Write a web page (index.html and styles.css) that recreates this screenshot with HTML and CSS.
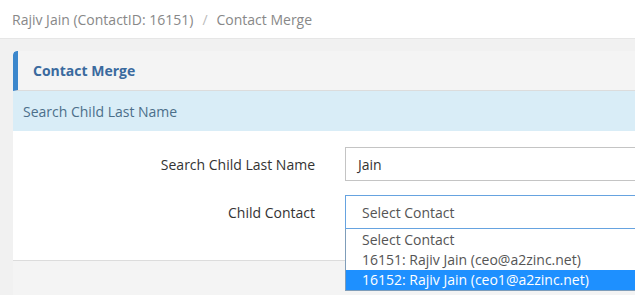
FILE: index.html
```html
<!DOCTYPE html>
<html>
<head>
<meta charset="utf-8">
<link rel="stylesheet" href="styles.css">
</head>
<body>
<div class="breadcrumb">
  <span class="crumb">Rajiv Jain (ContactID: 16151)</span>
  <span class="sep">/</span>
  <span class="crumb">Contact Merge</span>
</div>
<div class="page">
  <div class="panel">
    <div class="panel-heading">Contact Merge</div>
    <div class="info-bar">Search Child Last Name</div>
    <div class="panel-body">
      <div class="form-row">
        <label class="label">Search Child Last Name</label>
        <div class="input">Jain</div>
      </div>
      <div class="form-row">
        <label class="label">Child Contact</label>
        <div class="select-wrap">
          <div class="select">Select Contact</div>
          <div class="listbox">
            <div class="option">Select Contact</div>
            <div class="option">16151: Rajiv Jain (ceo@a2zinc.net)</div>
            <div class="option selected">16152: Rajiv Jain (ceo1@a2zinc.net)</div>
          </div>
        </div>
      </div>
    </div>
    <div class="panel-footer"></div>
  </div>
</div>
</body>
</html>
```
FILE: styles.css
```css
html, body {
  margin: 0;
  padding: 0;
  overflow: hidden;
}
body {
  font-family: "Open Sans", "Liberation Sans", sans-serif;
  background: #f1f1f1;
  width: 635px;
  height: 295px;
}
.breadcrumb {
  height: 38px;
  background: #fff;
  border-bottom: 1px solid #e6e6e6;
  display: flex;
  align-items: center;
  padding-left: 12px;
  font-size: 14px;
  color: #888;
  gap: 9px;
}
.sep {
  color: #bbb;
}
.page {
  padding: 12px 0 0 13px;
}
.panel {
  width: 622px;
  overflow: hidden;
  background: #fff;
  border-top-left-radius: 4px;
}
.panel-heading {
  height: 40px;
  box-sizing: border-box;
  border-left: 5px solid #3c87cc;
  border-top-left-radius: 4px;
  border-bottom: 1px solid #dcdcdc;
  background: #f4f4f4;
  padding-left: 15px;
  display: flex;
  align-items: center;
  font-size: 14px;
  font-weight: bold;
  color: #3a6a9e;
}
.info-bar {
  height: 40px;
  background: #d9edf7;
  padding-left: 10px;
  display: flex;
  align-items: center;
  font-size: 14px;
  color: #4c6f8a;
  box-sizing: border-box;
}
.panel-body {
  height: 129px;
  padding-top: 16px;
  box-sizing: border-box;
  display: flex;
  flex-direction: column;
  gap: 14px;
}
.form-row {
  display: grid;
  grid-template-columns: 302px 1fr;
  column-gap: 30px;
  align-items: center;
  margin-right: -2px;
}
.label {
  text-align: right;
  font-size: 14px;
  color: #333;
}
.input, .select {
  height: 34px;
  box-sizing: border-box;
  border: 1px solid #c4c4c4;
  display: flex;
  align-items: center;
  font-size: 14px;
  color: #333;
  padding-left: 12px;
  background: #fff;
}
.select {
  border-color: #66a3e0;
  padding-left: 16px;
  color: #555;
}
.select-wrap {
  position: relative;
}
.listbox {
  position: absolute;
  top: 34px;
  left: 0;
  right: 0;
  background: #fff;
  border: 1px solid #7f9db9;
  border-top: none;
  z-index: 2;
  padding-top: 1px;
}
.option {
  height: 20px;
  line-height: 20px;
  padding-left: 16px;
  font-size: 14px;
  color: #555;
}
.option.selected {
  background: #1e90ff;
  color: #fff;
}
.panel-footer {
  height: 40px;
  background: #f4f4f4;
  border-top: 1px solid #dcdcdc;
}
```
